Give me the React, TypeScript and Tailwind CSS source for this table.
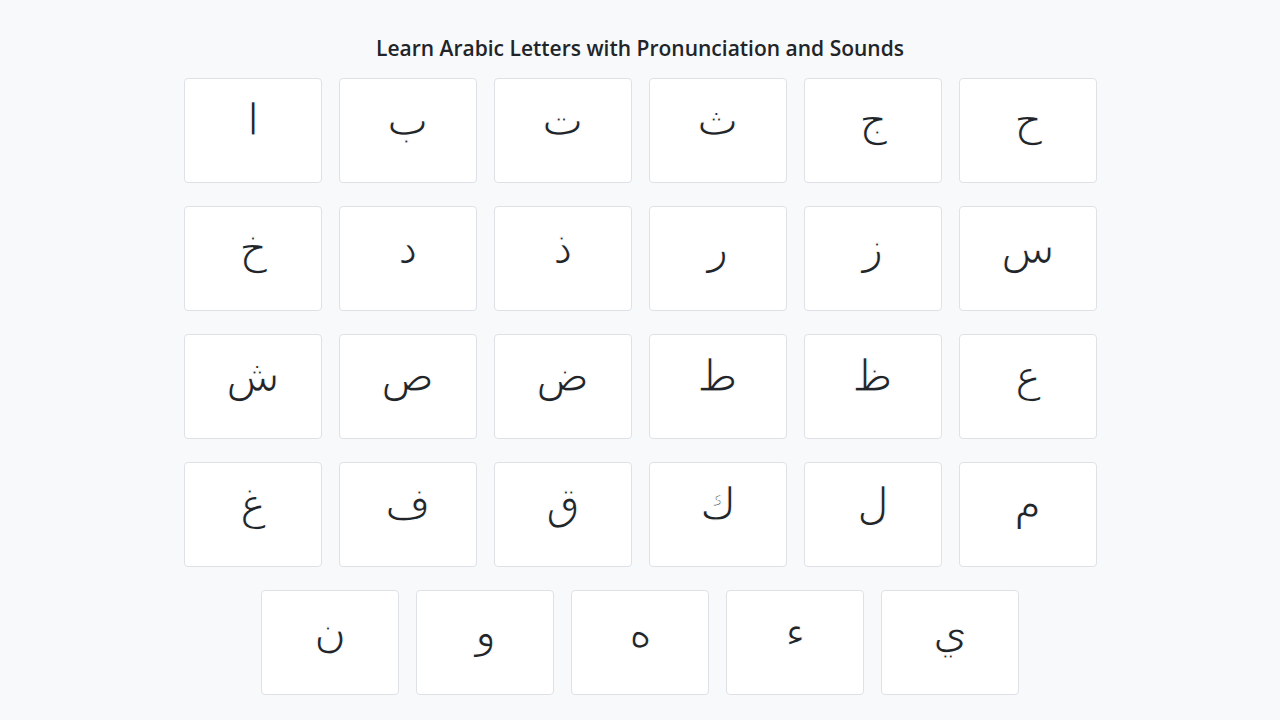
const letters = [
  "ا", "ب", "ت", "ث", "ج", "ح",
  "خ", "د", "ذ", "ر", "ز", "س",
  "ش", "ص", "ض", "ط", "ظ", "ع",
  "غ", "ف", "ق", "ك", "ل", "م",
  "ن", "و", "ه", "ء", "ي",
];

const LetterCard = ({ letter }: { letter: string }) => (
  <button
    type="button"
    className="flex h-[105px] w-[138px] justify-center rounded border border-[#dee2e6] bg-white pt-[15px]"
  >
    <span className="text-[44px] font-light leading-[1.2] text-[#212529] [-webkit-text-stroke:1.2px_white] [font-family:'DejaVu_Sans',sans-serif]">
      {letter}
    </span>
  </button>
);

export default function App() {
  return (
    <div className="min-h-screen bg-[#f8f9fa] pt-[34px] [font-family:'Open_Sans','Noto_Sans',sans-serif]">
      <h1 className="mb-[16px] text-center text-[21px] font-semibold leading-[28px] text-[#212529]">
        Learn Arabic Letters with Pronunciation and Sounds
      </h1>
      <div className="mx-auto flex w-[913px] flex-wrap justify-center gap-x-[17px] gap-y-[23px]">
        {letters.map((letter) => (
          <LetterCard key={letter} letter={letter} />
        ))}
      </div>
    </div>
  );
}
